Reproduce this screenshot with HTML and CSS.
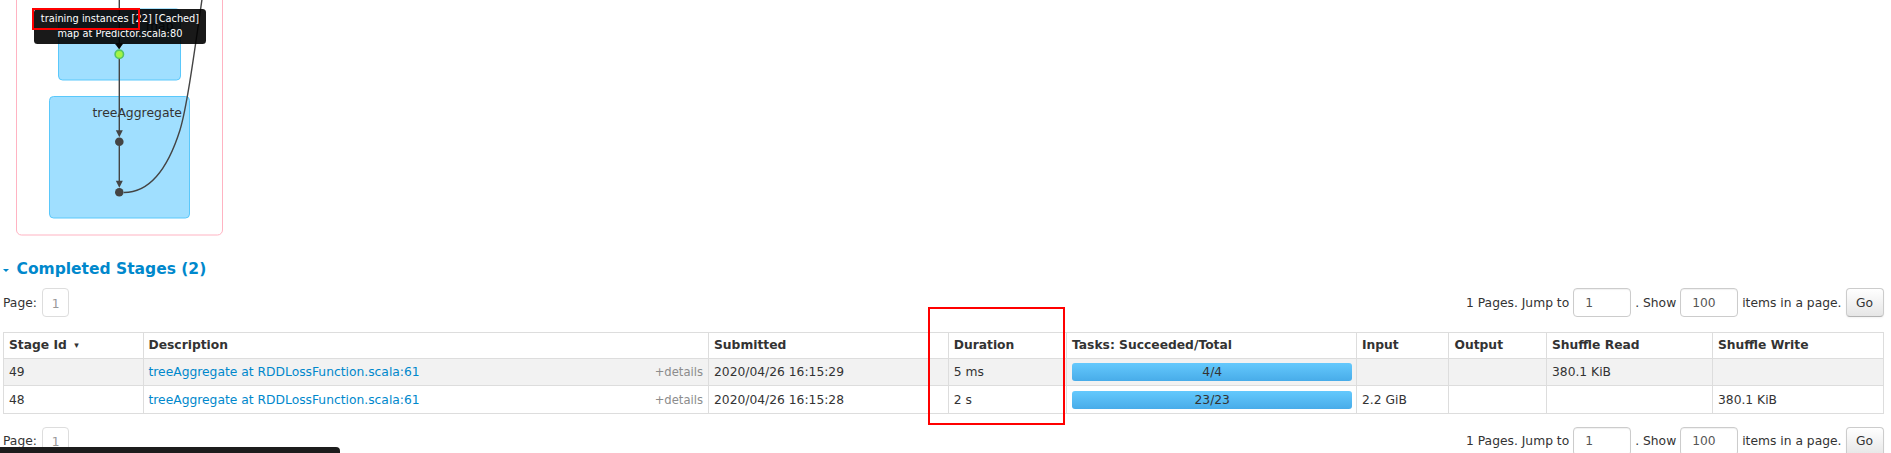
FILE: index.html
```html
<!DOCTYPE html>
<html>
<head>
<meta charset="utf-8">
<title>Stages</title>
<link rel="stylesheet" href="styles.css">
</head>
<body>
<div class="page">
  <div class="dag-wrap">
    <svg class="dag" width="240" height="245" viewBox="0 0 240 245" xmlns="http://www.w3.org/2000/svg">
      <rect class="stage-cluster" x="16.5" y="-20" width="206" height="255" rx="5"></rect>
      <rect class="op-cluster" x="58.5" y="9" width="122" height="71" rx="4"></rect>
      <text class="op-label" x="173.5" y="29.6">map</text>
      <rect class="op-cluster" x="49.5" y="96.5" width="140" height="121.5" rx="4"></rect>
      <text class="op-label" x="182" y="117.3">treeAggregate</text>
      <line class="edge" x1="119.3" y1="-5" x2="119.3" y2="44"></line>
      <polygon class="arrowhead" points="115.8,43 122.8,43 119.3,49.5"></polygon>
      <line class="edge" x1="119.3" y1="59" x2="119.3" y2="131"></line>
      <polygon class="arrowhead" points="115.8,130.3 122.8,130.3 119.3,137.3"></polygon>
      <line class="edge" x1="119.3" y1="146" x2="119.3" y2="181"></line>
      <polygon class="arrowhead" points="115.8,180.8 122.8,180.8 119.3,187.8"></polygon>
      <path class="edge" d="M124,192.5 C150,192.5 168,168 180,130 C186,110 192,70 202.6,-5"></path>
      <circle class="node-cached" cx="119.3" cy="54.3" r="4.2"></circle>
      <circle class="node" cx="119.3" cy="141.7" r="4.3"></circle>
      <circle class="node" cx="119.3" cy="192.3" r="4.3"></circle>
    </svg>
    <div class="tooltip">
      <div class="tooltip-inner">training instances [22] [Cached]<br>map at Predictor.scala:80</div>
      <div class="tooltip-arrow"></div>
    </div>
  </div>

  <div class="content">
    <h4 class="section-title"><span class="arrow-open"></span><a href="#">Completed Stages (2)</a></h4>

    <div class="pager">
      <div class="pager-left"><span>Page:</span><span class="page-box">1</span></div>
      <form class="pager-right">
        <label>1 Pages. Jump to</label>
        <input class="pg-input" type="text" value="1">
        <label>. Show</label>
        <input class="pg-input" type="text" value="100">
        <label>items in a page.</label>
        <button class="btn" type="button">Go</button>
      </form>
    </div>

    <table class="stages">
      <colgroup>
        <col class="c-id"><col class="c-desc"><col class="c-sub"><col class="c-dur"><col class="c-tasks"><col class="c-in"><col class="c-out"><col class="c-sr"><col class="c-sw">
      </colgroup>
      <thead>
        <tr>
          <th>Stage Id <span class="sort">&#9662;</span></th>
          <th>Description</th>
          <th>Submitted</th>
          <th>Duration</th>
          <th>Tasks: Succeeded/Total</th>
          <th>Input</th>
          <th>Output</th>
          <th>Shuffle Read</th>
          <th>Shuffle Write</th>
        </tr>
      </thead>
      <tbody>
        <tr class="odd">
          <td>49</td>
          <td><span class="details">+details</span><a href="#">treeAggregate at RDDLossFunction.scala:61</a></td>
          <td>2020/04/26 16:15:29</td>
          <td>5 ms</td>
          <td><div class="progress"><span class="progress-text">4/4</span></div></td>
          <td></td>
          <td></td>
          <td>380.1 KiB</td>
          <td></td>
        </tr>
        <tr class="even">
          <td>48</td>
          <td><span class="details">+details</span><a href="#">treeAggregate at RDDLossFunction.scala:61</a></td>
          <td>2020/04/26 16:15:28</td>
          <td>2 s</td>
          <td><div class="progress"><span class="progress-text">23/23</span></div></td>
          <td>2.2 GiB</td>
          <td></td>
          <td></td>
          <td>380.1 KiB</td>
        </tr>
      </tbody>
    </table>

    <div class="pager pager-bottom">
      <div class="pager-left"><span>Page:</span><span class="page-box">1</span></div>
      <form class="pager-right">
        <label>1 Pages. Jump to</label>
        <input class="pg-input" type="text" value="1">
        <label>. Show</label>
        <input class="pg-input" type="text" value="100">
        <label>items in a page.</label>
        <button class="btn" type="button">Go</button>
      </form>
    </div>
  </div>

  <div class="mark mark-tip"></div>
  <div class="mark mark-duration"></div>
  <div class="bottom-tip"></div>
</div>
</body>
</html>
```

FILE: styles.css
```css
* { box-sizing: border-box; }

html, body {
  margin: 0;
  padding: 0;
  background: #fff;
  overflow: hidden;
}

body {
  font-family: "DejaVu Sans", "Liberation Sans", sans-serif;
  font-size: 12.3px;
  color: #333;
}

.page {
  position: relative;
  width: 1891px;
  height: 453px;
  overflow: hidden;
}

a { color: #0088cc; text-decoration: none; }

/* ---------- DAG ---------- */
.dag-wrap {
  position: relative;
  height: 245px;
}

.dag { display: block; overflow: hidden; }

.stage-cluster { fill: #fff; stroke: #ffb3c2; stroke-width: 1; }
.op-cluster { fill: #a0dfff; stroke: #5ac8fb; stroke-width: 1; }
.op-label {
  font-family: "DejaVu Sans", sans-serif;
  font-size: 12.4px;
  fill: #333;
  text-anchor: end;
}
.edge { stroke: #444; stroke-width: 1.4; fill: none; }
.arrowhead { fill: #444; }
.node { fill: #444; }
.node-cached { fill: #a3f545; stroke: #52c366; stroke-width: 1.6; }

.tooltip {
  position: absolute;
  left: 34.3px;
  top: 9.3px;
  width: 171.4px;
}
.tooltip-inner {
  background: rgba(0, 0, 0, 0.9);
  color: #fff;
  border-radius: 3.5px;
  text-align: center;
  font-size: 9.8px;
  line-height: 14.4px;
  padding: 3px 4px;
  height: 35px;
  white-space: nowrap;
}
.tooltip-arrow {
  position: absolute;
  left: 81px;
  top: 35px;
  width: 0;
  height: 0;
  border-left: 4.5px solid transparent;
  border-right: 4.5px solid transparent;
  border-top: 5px solid rgba(0, 0, 0, 0.9);
}

/* ---------- content ---------- */
.content {
  padding: 0 7.5px 0 3px;
}

.section-title {
  margin: 15px 0 0;
  height: 18px;
  font-size: 15.5px;
  line-height: 18px;
  font-weight: bold;
  display: flex;
  align-items: center;
}
.arrow-open {
  width: 0;
  height: 0;
  border-left: 3.2px solid transparent;
  border-right: 3.2px solid transparent;
  border-top: 3.6px solid #0088cc;
  margin: 2px 7.5px 0 0;
}

.pager {
  margin-top: 10.3px;
  height: 29px;
  display: flex;
  justify-content: space-between;
  align-items: center;
}
.pager-bottom { margin-top: 12.7px; }

.pager-left {
  display: flex;
  align-items: center;
  gap: 5px;
  height: 29px;
}
.page-box {
  width: 27.4px;
  height: 29px;
  border: 1px solid #ddd;
  border-radius: 4px;
  display: flex;
  align-items: center;
  justify-content: center;
  color: #999;
  padding-top: 2px;
}

.pager-right {
  margin: 0;
  display: flex;
  align-items: center;
  gap: 4px;
  height: 29px;
}
.pager-right label { white-space: nowrap; }

.pg-input {
  width: 58px;
  height: 29px;
  margin: 0;
  border: 1px solid #ccc;
  border-radius: 4px;
  padding: 0 0 0 11px;
  font-family: inherit;
  font-size: 12.3px;
  color: #555;
  background: #fff;
  box-shadow: inset 0 1px 1px rgba(0,0,0,0.06);
}

.btn {
  width: 38px;
  height: 29px;
  margin: 0;
  padding: 0;
  border: 1px solid #ccc;
  border-bottom-color: #b3b3b3;
  border-radius: 4px;
  background: linear-gradient(to bottom, #ffffff, #e6e6e6);
  font-family: inherit;
  font-size: 12.3px;
  color: #333;
  box-shadow: inset 0 1px 0 rgba(255,255,255,0.2), 0 1px 2px rgba(0,0,0,0.05);
}

/* ---------- table ---------- */
.stages {
  margin-top: 14.4px;
  width: 1880.5px;
  table-layout: fixed;
  border-collapse: collapse;
}
.c-id { width: 139.5px; }
.c-desc { width: 565.5px; }
.c-sub { width: 239.7px; }
.c-dur { width: 118.3px; }
.c-tasks { width: 290px; }
.c-in { width: 92.5px; }
.c-out { width: 97.5px; }
.c-sr { width: 166px; }
.c-sw { width: 171.5px; }

.stages th, .stages td {
  border: 1px solid #ddd;
  padding: 0 5px;
  text-align: left;
  vertical-align: middle;
  white-space: nowrap;
  overflow: hidden;
}
.stages th {
  height: 26.6px;
  font-weight: bold;
}
.stages tbody tr.odd td { height: 27px; background: #f2f2f2; }
.stages tbody tr.even td { height: 28px; background: #fff; }

.sort { font-size: 9px; margin-left: 3px; position: relative; top: -1px; }

.details {
  float: right;
  color: #8c8c8c;
  font-size: 11.6px;
}

.progress {
  height: 18px;
  border-radius: 3px;
  background: linear-gradient(to bottom, #64c9fd, #48ace9);
  display: flex;
  align-items: center;
  justify-content: center;
  margin-right: -1.5px;
}
.progress-text { color: #333; }

/* ---------- overlays ---------- */
.mark {
  position: absolute;
  border: 2px solid #f00;
}
.mark-tip {
  left: 32.3px;
  top: 7.7px;
  width: 108px;
  height: 22.6px;
}
.mark-duration {
  left: 927.7px;
  top: 306.7px;
  width: 137.6px;
  height: 118.6px;
}

.bottom-tip {
  position: absolute;
  left: 0;
  top: 447.3px;
  width: 340px;
  height: 20px;
  background: #1c1c1c;
  border-radius: 0 4px 0 0;
}
```
